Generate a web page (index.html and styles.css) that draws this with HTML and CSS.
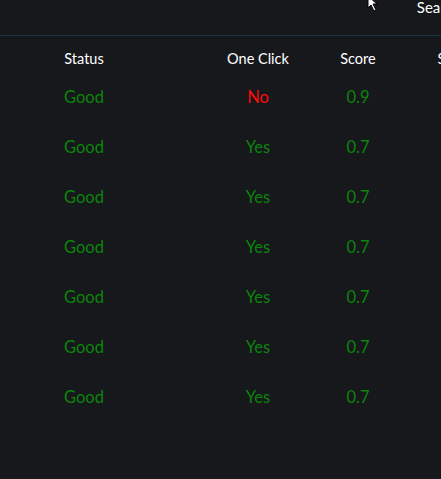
FILE: index.html
```html
<!DOCTYPE html>
<html lang="en">
<head>
<meta charset="utf-8">
<title>Results</title>
<link rel="stylesheet" href="styles.css">
</head>
<body>
<div class="page">
  <header class="topbar">
    <span class="search">Search</span>
  </header>
  <div class="table">
    <div class="row head">
      <div class="cell c1">Status</div>
      <div class="cell">One Click</div>
      <div class="cell">Score</div>
      <div class="cell c4">Submitted</div>
    </div>
    <div class="row">
      <div class="cell c1 good">Good</div>
      <div class="cell bad">No</div>
      <div class="cell good">0.9</div>
      <div class="cell c4"></div>
    </div>
    <div class="row">
      <div class="cell c1 good">Good</div>
      <div class="cell good">Yes</div>
      <div class="cell good">0.7</div>
      <div class="cell c4"></div>
    </div>
    <div class="row">
      <div class="cell c1 good">Good</div>
      <div class="cell good">Yes</div>
      <div class="cell good">0.7</div>
      <div class="cell c4"></div>
    </div>
    <div class="row">
      <div class="cell c1 good">Good</div>
      <div class="cell good">Yes</div>
      <div class="cell good">0.7</div>
      <div class="cell c4"></div>
    </div>
    <div class="row">
      <div class="cell c1 good">Good</div>
      <div class="cell good">Yes</div>
      <div class="cell good">0.7</div>
      <div class="cell c4"></div>
    </div>
    <div class="row">
      <div class="cell c1 good">Good</div>
      <div class="cell good">Yes</div>
      <div class="cell good">0.7</div>
      <div class="cell c4"></div>
    </div>
    <div class="row">
      <div class="cell c1 good">Good</div>
      <div class="cell good">Yes</div>
      <div class="cell good">0.7</div>
      <div class="cell c4"></div>
    </div>
  </div>
  <svg class="cursor" width="14" height="12" viewBox="0 0 14 12" aria-hidden="true">
    <polygon points="1,-4 1,8 4,5 7,11 9,10 6,4 10,4" fill="#ffffff" stroke="#000000" stroke-width="1"/>
  </svg>
</div>
</body>
</html>
```
FILE: styles.css
```css
html, body {
  margin: 0;
  padding: 0;
  background: #17181c;
  overflow: hidden;
}

.page {
  position: relative;
  width: 441px;
  height: 479px;
  overflow: hidden;
  font-family: "Lato", "Noto Sans", sans-serif;
  color: #ffffff;
}

.topbar {
  height: 36px;
  border-bottom: 1px solid #143440;
  box-sizing: border-box;
  display: flex;
  justify-content: flex-end;
  align-items: flex-start;
}

.search {
  font-size: 15px;
  line-height: 15px;
  margin-top: 0;
  margin-right: -20px;
  white-space: nowrap;
}

.table {
  display: flex;
  flex-direction: column;
  padding-top: 12px;
}

.row {
  display: grid;
  grid-template-columns: 178px 160px 40px 184px;
  height: 50px;
  align-items: center;
  font-size: 16.5px;
  white-space: nowrap;
}

.row.head {
  height: 20px;
  font-size: 14.5px;
  margin-bottom: 4px;
}

.cell {
  text-align: center;
  display: flex;
  justify-content: center;
}

.c1 {
  padding-right: 10px;
}

.good {
  color: #0a850a;
}

.bad {
  color: #ff0a0a;
}

.cursor {
  position: absolute;
  left: 367px;
  top: 0;
}
```
